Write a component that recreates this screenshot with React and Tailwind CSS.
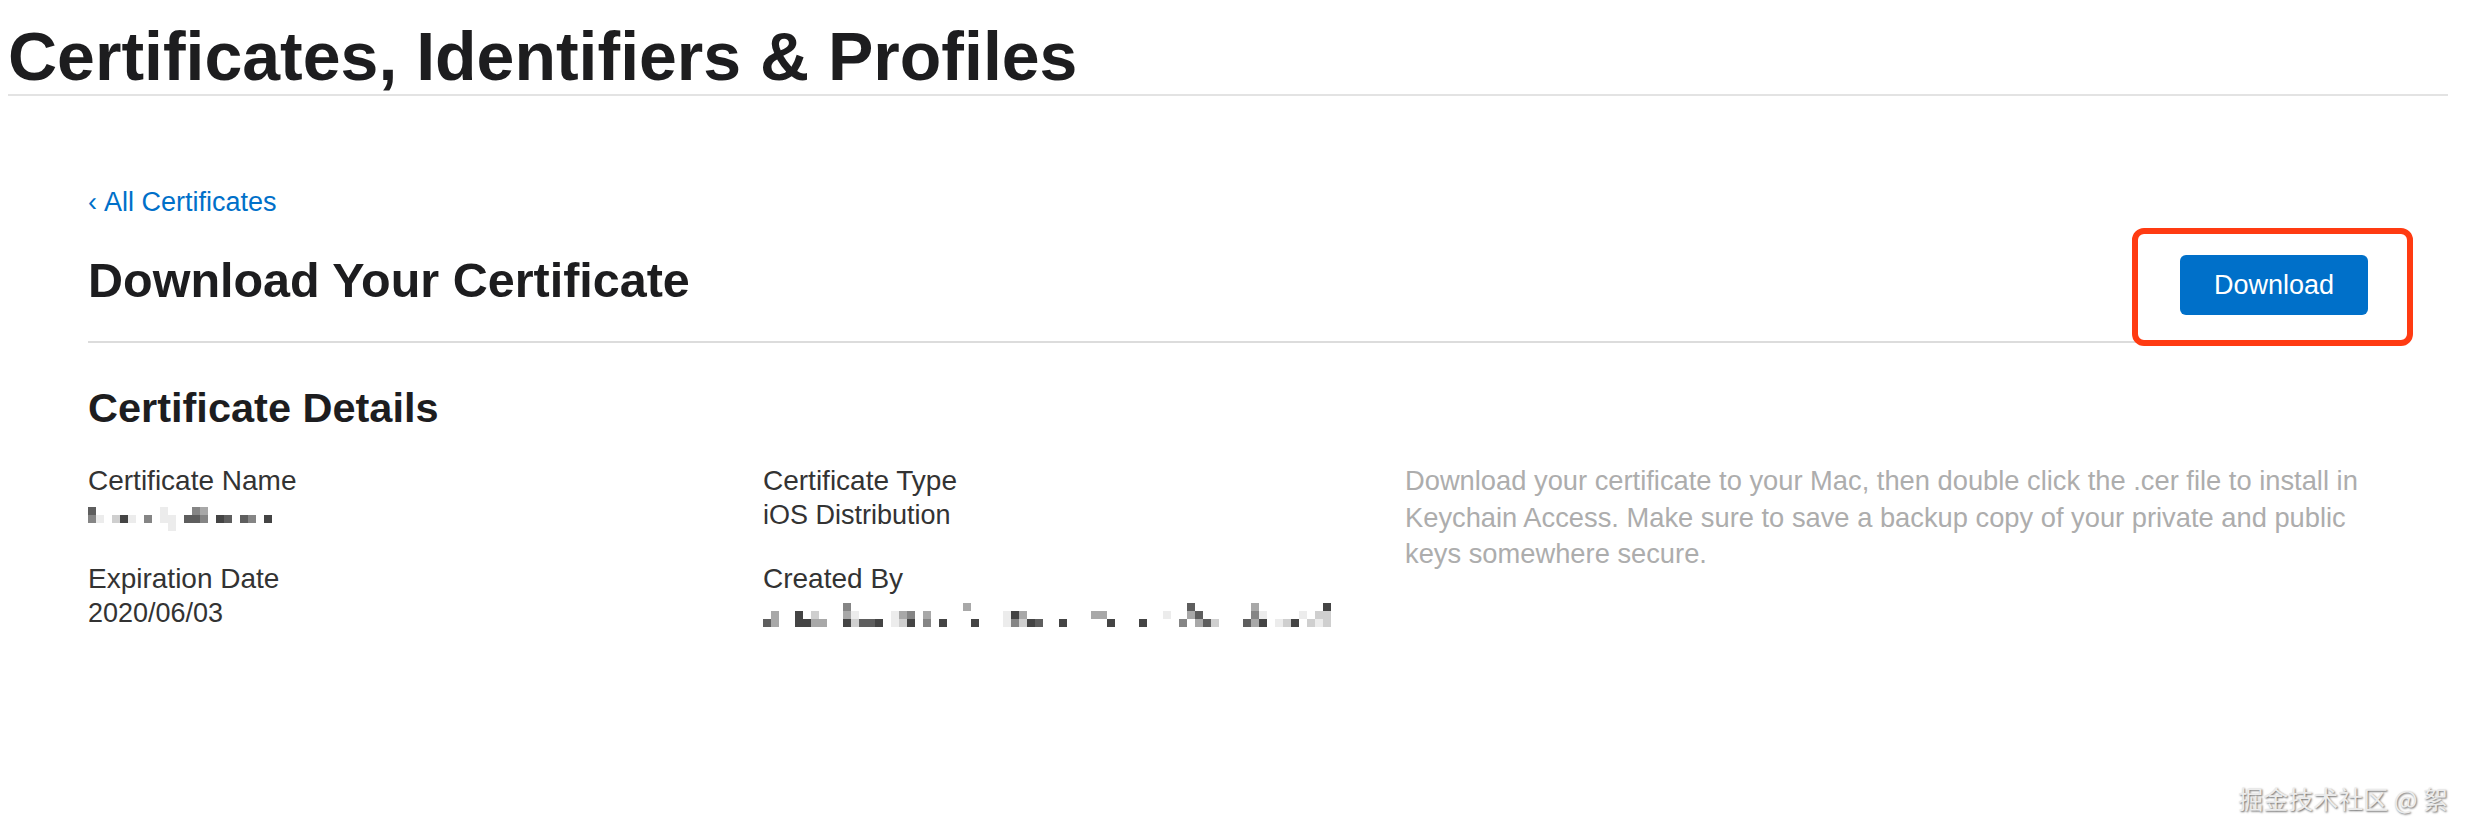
const shades = {
  1: 'bg-[#ececec]',
  2: 'bg-[#cfcfcf]',
  3: 'bg-[#a8a8a8]',
  4: 'bg-[#858585]',
  5: 'bg-[#5e5e5e]',
  6: 'bg-[#444444]',
};

// pixelated (redacted) values: [col, row, shade]
const nameCells = [
  [0, 0, 5], [0, 1, 4], [1, 1, 1], [3, 1, 2], [4, 1, 6], [5, 1, 1], [7, 1, 4],
  [9, 0, 1], [9, 1, 1], [10, 1, 1], [10, 2, 1], [12, 1, 5], [13, 0, 4], [13, 1, 5],
  [14, 0, 3], [14, 1, 4], [16, 1, 6], [17, 1, 5], [19, 1, 5], [20, 1, 4], [22, 1, 6],
];

const creatorCells = [
  [0, 2, 5], [1, 1, 3], [1, 2, 3], [4, 1, 6], [4, 2, 6], [5, 2, 6], [6, 1, 2], [6, 2, 3],
  [7, 2, 3], [10, 0, 4], [10, 1, 3], [10, 2, 6], [11, 1, 1], [11, 2, 2], [12, 2, 5],
  [13, 2, 5], [14, 2, 6], [16, 1, 1], [16, 2, 1], [17, 1, 3], [17, 2, 2], [18, 1, 4],
  [18, 2, 6], [20, 1, 3], [20, 2, 4], [22, 2, 6], [25, 0, 3], [26, 2, 6], [30, 1, 1],
  [30, 2, 1], [31, 1, 6], [31, 2, 4], [32, 1, 3], [32, 2, 2], [33, 2, 6], [34, 2, 5],
  [37, 2, 6], [41, 1, 3], [42, 1, 3], [43, 2, 6], [47, 2, 6], [50, 1, 1], [52, 2, 4],
  [53, 0, 5], [53, 1, 3], [54, 1, 5], [54, 2, 3], [55, 2, 5], [56, 2, 2], [60, 2, 5],
  [61, 0, 3], [61, 1, 4], [61, 2, 3], [62, 1, 1], [62, 2, 6], [64, 2, 1], [65, 2, 2],
  [66, 2, 6], [67, 1, 1], [68, 2, 2], [69, 1, 2], [69, 2, 1], [70, 0, 6], [70, 1, 2],
  [70, 2, 2],
];

const Pixelated = ({ cells, cols, className }) => {
  const grid = [0, 1, 2].map(() => Array(cols).fill(0));
  cells.forEach(([c, r, s]) => {
    grid[r][c] = s;
  });
  return (
    <div className={className}>
      {grid.map((row, r) => (
        <div key={r} className="flex">
          {row.map((s, c) => (
            <span key={c} className={`block w-[8px] h-[8px] ${s ? shades[s] : ''}`} />
          ))}
        </div>
      ))}
    </div>
  );
};

const Field = ({ label, children }) => (
  <div className="flex flex-col">
    <div className="text-[28px] leading-[35px] text-[#333333]">{label}</div>
    <div className="h-[35px] text-[27px] leading-[35px] text-[#333333]">{children}</div>
  </div>
);

export default function App() {
  return (
    <div className="relative w-[2472px] h-[836px] overflow-hidden bg-white font-['Liberation_Sans',Arial,sans-serif]">
      {/* Page header */}
      <header className="pl-[8px] pr-[24px] pt-[22px]">
        <h1 className="text-[68px] leading-none font-bold text-[#1d1d1f]">
          Certificates, Identifiers &amp; Profiles
        </h1>
        <div className="mt-[4px] h-[2px] bg-[#e3e3e3]" />
      </header>

      <main className="ml-[88px] w-[2280px]">
        <a href="#" className="mt-[89px] flex items-center gap-[7px] text-[27px] leading-[35px] text-[#0070c9]">
          <span className="text-[27px]">‹</span>
          <span>All Certificates</span>
        </a>

        {/* Title row */}
        <div className="mt-[29px] flex items-start justify-between">
          <h2 className="mt-[3px] text-[48.5px] leading-[56px] font-bold text-[#1d1d1f]">Download Your Certificate</h2>
          <div className="relative mt-[6px]">
            <button className="w-[188px] h-[60px] rounded-[6px] bg-[#0070c9] text-[27px] text-white">
              Download
            </button>
            <div className="pointer-events-none absolute -left-[48px] -top-[27px] w-[281px] h-[118px] rounded-[12px] border-[6px] border-[#ff3b12]" />
          </div>
        </div>
        <div className="mt-[26px] h-[2px] bg-[#dcdcdc]" />

        {/* Details */}
        <h3 className="mt-[41px] text-[41.5px] leading-[48px] font-bold text-[#1d1d1f]">Certificate Details</h3>

        <div className="mt-[31px] grid grid-cols-[675px_642px_963px]">
          <div className="flex flex-col gap-[28px]">
            <Field label="Certificate Name">
              <Pixelated cells={nameCells} cols={23} className="pt-[9px]" />
            </Field>
            <Field label="Expiration Date">2020/06/03</Field>
          </div>
          <div className="flex flex-col gap-[28px]">
            <Field label="Certificate Type">iOS Distribution</Field>
            <Field label="Created By">
              <Pixelated cells={creatorCells} cols={71} className="pt-[7px]" />
            </Field>
          </div>
          <p className="text-[27.3px] leading-[36.5px] text-[#adadad]">
            Download your certificate to your Mac, then double click the .cer file to install in Keychain Access. Make
            sure to save a backup copy of your private and public keys somewhere secure.
          </p>
        </div>
      </main>

      {/* Watermark */}
      <div className="absolute right-[24px] bottom-[20px] font-['Noto_Sans_CJK_SC',sans-serif] text-[25px] leading-[36px] text-[#ececec] [text-shadow:1px_1px_2px_rgba(0,0,0,0.6)]">
        掘金技术社区 @ 絮
      </div>
    </div>
  );
}
